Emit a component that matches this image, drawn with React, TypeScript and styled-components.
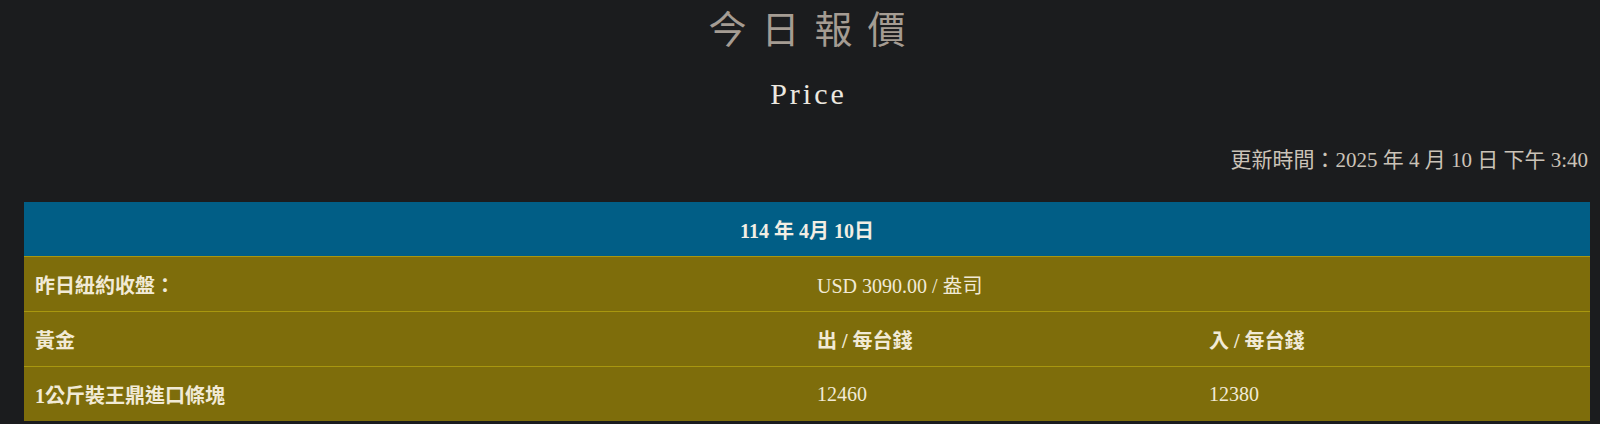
import React from 'react'
import styled, { createGlobalStyle } from 'styled-components'

const GlobalStyle = createGlobalStyle`
  html, body {
    margin: 0;
    padding: 0;
    background: #1b1c1e;
  }
  body {
    font-family: 'Liberation Serif', 'Noto Sans CJK TC', serif;
  }
`

//#region s
const Page = styled.div`
  width: 1600px;
  height: 424px;
  overflow: hidden;
  background: #1b1c1e;
  padding: 0 10px 0 24px;
  box-sizing: border-box;
  display: flex;
  flex-direction: column;
  align-items: center;
`

const Title = styled.h1`
  margin: 7px 0 0;
  font-size: 38px;
  font-weight: 400;
  letter-spacing: 15px;
  padding-left: 15px;
  color: #a59c93;
  line-height: 46px;
`

const SubTitle = styled.h2`
  margin: 24px 0 0;
  font-size: 30px;
  font-weight: 400;
  letter-spacing: 3px;
  padding-left: 3px;
  color: #ece8e0;
  line-height: 34px;
`

const UpdateTime = styled.div`
  align-self: stretch;
  text-align: right;
  padding-right: 2px;
  margin-top: 37px;
  font-size: 21px;
  line-height: 24px;
  color: #cbc3b8;
`

const Table = styled.div`
  align-self: stretch;
  margin-top: 30px;
  display: grid;
  grid-template-columns: 782px 392px 392px;
`

const HeadCell = styled.div`
  grid-column: 1 / -1;
  height: 54px;
  background: #015e86;
  color: #f2eee4;
  font-weight: 700;
  font-size: 20px;
  display: flex;
  align-items: center;
  justify-content: center;
`

const Cell = styled.div<{ $span?: number; $bold?: boolean }>`
  grid-column: span ${(p) => p.$span ?? 1};
  height: 54px;
  background: #7e6d0b;
  border-top: 1px solid #a8970f;
  color: #f1ead6;
  font-size: 20px;
  font-weight: ${(p) => (p.$bold ? 700 : 400)};
  display: flex;
  align-items: center;
  padding-left: 11px;
`
//#endregion

const rows = [
  ['黃金', '出 / 每台錢', '入 / 每台錢'],
  ['1公斤裝王鼎進口條塊', '12460', '12380'],
]

const App = () => {
  return (
    <>
      <GlobalStyle />
      <Page>
        <Title>今日報價</Title>
        <SubTitle>Price</SubTitle>
        <UpdateTime>更新時間：2025 年 4 月 10 日 下午 3:40</UpdateTime>
        <Table>
          <HeadCell>114 年 4月 10日</HeadCell>
          <Cell $bold>昨日紐約收盤：</Cell>
          <Cell $span={2}>USD 3090.00 / 盎司</Cell>
          {rows.map((r, i) =>
            r.map((c, j) => (
              <Cell key={`${i}-${j}`} $bold={j === 0 || i === 0}>
                {c}
              </Cell>
            )),
          )}
        </Table>
      </Page>
    </>
  )
}

export default App
